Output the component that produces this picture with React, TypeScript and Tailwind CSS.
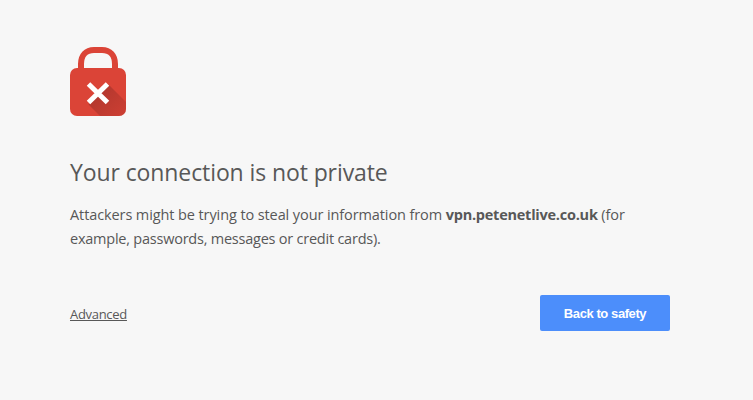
function LockIcon() {
  return (
    <svg width="56" height="69" viewBox="0 0 56 69" fill="none" aria-hidden="true">
      <defs>
        <linearGradient id="shade" x1="28" y1="46" x2="50" y2="68" gradientUnits="userSpaceOnUse">
          <stop stopColor="#a5332b" stopOpacity="0.75" />
          <stop offset="1" stopColor="#b5372d" stopOpacity="0.45" />
        </linearGradient>
        <clipPath id="body">
          <rect y="21" width="56" height="48" rx="7" />
        </clipPath>
      </defs>
      <path d="M11 23V17C11 8.500 16 3 24 3h8c8 0 13 5.500 13 14v6" stroke="#db4437" strokeWidth="6" />
      <rect y="21" width="56" height="48" rx="7" fill="#db4437" />
      <g clipPath="url(#body)">
        <path d="M38.500 37.500 60 59v16H36L18.500 57.500Z" fill="url(#shade)" />
      </g>
      <path d="m18.500 37 19 18.500M37.500 37l-19 18.500" stroke="#fff" strokeWidth="5" />
    </svg>
  );
}

export default function App() {
  return (
    <div className="min-h-screen bg-[#f7f7f7] pt-[47px] pl-[70px] font-['Open_Sans','Noto_Sans',sans-serif] text-[#585858]">
      <main className="w-[600px]">
        <LockIcon />

        <h1 className="mt-[39px] text-[23px] leading-[34px] font-normal tracking-[-0.1px] whitespace-nowrap">
          Your connection is not private
        </h1>

        <p className="mt-[14px] text-[14.5px] leading-6 tracking-[-0.1px]">
          Attackers might be trying to steal your information from{' '}
          <strong className="font-bold tracking-[-0.24px]">vpn.petenetlive.co.uk</strong> (for
          <br />
          <span className="tracking-[-0.23px]">example, passwords, messages or credit cards).</span>
        </p>

        {/* Actions */}
        <div className="mt-[44px] flex items-center justify-between">
          <a href="#" className="pt-0.5 text-[13px] leading-5 tracking-[-0.3px] underline">
            Advanced
          </a>
          <button className="h-9 w-[130px] cursor-pointer rounded-xs bg-[#4c8efb] pt-0.5 font-['Liberation_Sans',sans-serif] text-[13px] font-bold tracking-[-0.42px] whitespace-nowrap text-white">
            Back to safety
          </button>
        </div>
      </main>
    </div>
  );
}
